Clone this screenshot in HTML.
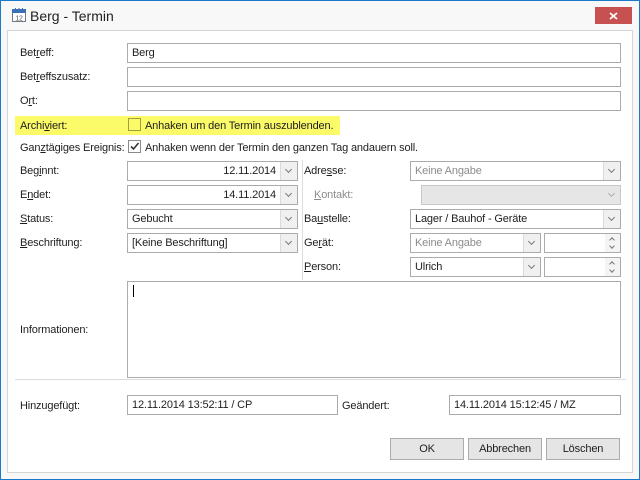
<!DOCTYPE html>
<html><head><meta charset="utf-8"><style>
*{box-sizing:border-box;margin:0;padding:0}
body{width:640px;height:480px;overflow:hidden;background:#f8f8f8;font-family:"Liberation Sans",sans-serif;font-size:11px;letter-spacing:-0.15px;color:#1e1e1e;position:relative}
.win{position:absolute;left:0;top:0;width:640px;height:480px;border:1px solid #1979ca}
.abs{position:absolute}
.panel{position:absolute;left:7px;top:30px;width:626px;height:443px;background:#fff;border:1px solid #d5d5d5}
.lbl{position:absolute;white-space:nowrap;line-height:14px}
.tb{position:absolute;border:1px solid #ababab;background:#fff;height:20px;padding:2px 4px;line-height:14px;white-space:nowrap}
.dd{position:absolute;right:0;top:0;width:17px;height:18px;background:#f0f0f0;border-left:1px solid #dadada}
.dd:after{content:"";position:absolute;left:5px;top:5px;width:4px;height:4px;border-right:1.5px solid #777;border-bottom:1.5px solid #777;transform:rotate(45deg)}
.sp{position:absolute;right:0;top:0;width:15px;height:18px;background:#f4f4f4}
.sp:before{content:"";position:absolute;left:5px;top:4px;width:3px;height:3px;border-left:1.5px solid #777;border-top:1.5px solid #777;transform:rotate(45deg)}
.sp:after{content:"";position:absolute;left:5px;top:10px;width:3px;height:3px;border-right:1.5px solid #777;border-bottom:1.5px solid #777;transform:rotate(45deg)}
.gray{color:#8c8c8c}
.btn{position:absolute;top:438px;height:22px;border:1px solid #acacac;background:#e5e5e5;text-align:center;line-height:20px}
u{text-decoration:underline}
</style></head><body>
<div class="win"></div>
<svg class="abs" style="left:12px;top:8px" width="14" height="14" viewBox="0 0 14 14">
<rect x="0.5" y="1.5" width="13" height="12" fill="#fff" stroke="#6b7a8c"/>
<rect x="0.5" y="1.5" width="13" height="3" fill="#3c6fb4" stroke="#3c6fb4"/>
<rect x="3" y="0" width="1" height="3" fill="#3c6fb4"/><rect x="6.5" y="0" width="1" height="3" fill="#3c6fb4"/><rect x="10" y="0" width="1" height="3" fill="#3c6fb4"/>
<text x="7" y="12.5" font-size="7" text-anchor="middle" fill="#555" font-family="Liberation Sans">12</text>
</svg>
<div class="lbl" style="left:30px;top:7px;font-size:14px;letter-spacing:0;line-height:18px;color:#222">Berg - Termin</div>
<div class="abs" style="left:595px;top:7px;width:37px;height:17px;background:#c75050"></div>
<svg class="abs" style="left:609px;top:12px" width="9" height="8"><path d="M1 1L8 7M8 1L1 7" stroke="#fff" stroke-width="1.8"/></svg>
<div class="panel"></div>

<div class="lbl" style="left:20px;top:46px">Bet<u>r</u>eff:</div>
<div class="tb" style="left:127px;top:43px;width:494px">Berg</div>
<div class="lbl" style="left:20px;top:70px">Bet<u>r</u>effszusatz:</div>
<div class="tb" style="left:127px;top:67px;width:494px"></div>
<div class="lbl" style="left:20px;top:94px">O<u>r</u>t:</div>
<div class="tb" style="left:127px;top:91px;width:494px"></div>

<div class="abs" style="left:15px;top:116px;width:325px;height:19px;background:#fbfb6a"></div>
<div class="lbl" style="left:20px;top:119px">Archi<u>v</u>iert:</div>
<div class="abs" style="left:128px;top:118px;width:13px;height:13px;border:1px solid #a0a040"></div>
<div class="lbl" style="left:145px;top:119px">Anhaken um den Termin auszublenden.</div>

<div class="lbl" style="left:20px;top:141px">Gan<u>z</u>tägiges Ereignis:</div>
<div class="abs" style="left:128px;top:140px;width:13px;height:13px;border:1px solid #8a8a8a;background:#fff"></div>
<svg class="abs" style="left:129px;top:141px" width="11" height="11"><path d="M2 5.5L4.5 8L9.5 2" stroke="#333" stroke-width="1.6" fill="none"/></svg>
<div class="lbl" style="left:145px;top:141px">Anhaken wenn der Termin den ganzen Tag andauern soll.</div>

<div class="abs" style="left:302px;top:160px;width:1px;height:120px;background:#dcdcdc"></div>

<div class="lbl" style="left:20px;top:164px">Beg<u>i</u>nnt:</div>
<div class="tb" style="left:127px;top:161px;width:171px;text-align:right;padding-right:21px">12.11.2014<div class="dd"></div></div>
<div class="lbl" style="left:20px;top:188px">E<u>n</u>det:</div>
<div class="tb" style="left:127px;top:185px;width:171px;text-align:right;padding-right:21px">14.11.2014<div class="dd"></div></div>
<div class="lbl" style="left:20px;top:212px"><u>S</u>tatus:</div>
<div class="tb" style="left:127px;top:209px;width:171px">Gebucht<div class="dd"></div></div>
<div class="lbl" style="left:20px;top:236px"><u>B</u>eschriftung:</div>
<div class="tb" style="left:127px;top:233px;width:171px">[Keine Beschriftung]<div class="dd"></div></div>

<div class="lbl" style="left:304px;top:164px">Adre<u>s</u>se:</div>
<div class="tb gray" style="left:410px;top:161px;width:211px">Keine Angabe<div class="dd"></div></div>
<div class="lbl gray" style="left:314px;top:188px"><u>K</u>ontakt:</div>
<div class="tb" style="left:421px;top:185px;width:200px;background:#e6e6e6;border-color:#c8c8c8"><div class="dd" style="background:#e6e6e6;border-left-color:#e6e6e6;opacity:.5"></div></div>
<div class="lbl" style="left:304px;top:212px">Ba<u>u</u>stelle:</div>
<div class="tb" style="left:410px;top:209px;width:211px">Lager / Bauhof - Geräte<div class="dd"></div></div>
<div class="lbl" style="left:304px;top:236px">Ge<u>r</u>ät:</div>
<div class="tb gray" style="left:410px;top:233px;width:131px">Keine Angabe<div class="dd"></div></div>
<div class="tb" style="left:544px;top:233px;width:77px"><div class="sp"></div></div>
<div class="lbl" style="left:304px;top:260px"><u>P</u>erson:</div>
<div class="tb" style="left:410px;top:257px;width:131px">Ulrich<div class="dd"></div></div>
<div class="tb" style="left:544px;top:257px;width:77px"><div class="sp"></div></div>

<div class="lbl" style="left:20px;top:323px">Informationen:</div>
<div class="tb" style="left:127px;top:281px;width:494px;height:97px"></div>
<div class="abs" style="left:133px;top:285px;width:1px;height:12px;background:#000"></div>

<div class="abs" style="left:15px;top:379px;width:611px;height:1px;background:#dcdcdc"></div>

<div class="lbl" style="left:20px;top:399px">Hinzugefügt:</div>
<div class="tb" style="left:127px;top:395px;width:211px">12.11.2014 13:52:11 / CP</div>
<div class="lbl" style="left:342px;top:399px">Geändert:</div>
<div class="tb" style="left:449px;top:395px;width:172px">14.11.2014 15:12:45 / MZ</div>

<div class="btn" style="left:390px;width:74px">OK</div>
<div class="btn" style="left:468px;width:74px">Abbrechen</div>
<div class="btn" style="left:546px;width:74px">Löschen</div>
</body></html>
